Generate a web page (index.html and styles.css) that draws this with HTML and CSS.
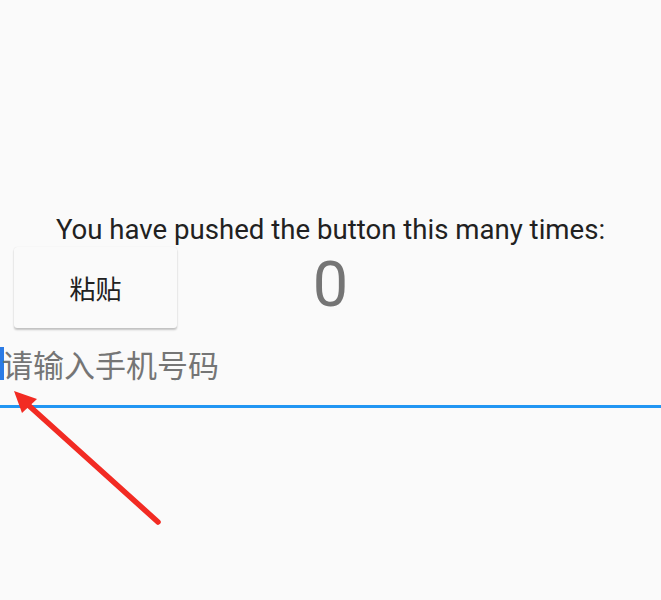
FILE: index.html
```html
<!DOCTYPE html>
<html lang="zh-CN">
<head>
  <meta charset="UTF-8">
  <meta name="viewport" content="width=device-width, initial-scale=1.0">
  <title>Flutter Demo</title>
  <link rel="stylesheet" href="styles.css">
</head>
<body>
  <div class="page">
    <p class="caption">You have pushed the button this many times:</p>

    <div class="counter-row">
      <button class="paste-btn">粘贴</button>
      <span class="counter">0</span>
      <span></span>
    </div>

    <div class="phone-field">
      <span class="cursor"></span>
      <span class="placeholder">请输入手机号码</span>
    </div>

    <!-- annotation arrow pointing at the cursor -->
    <svg class="arrow" width="661" height="600" viewBox="0 0 661 600">
      <line x1="158" y1="522" x2="26" y2="403" stroke="#f22b23" stroke-width="5.5" stroke-linecap="round"/>
      <polygon points="14,391 37,399 22,413" fill="#f22b23"/>
    </svg>
  </div>
</body>
</html>
```

FILE: styles.css
```css
html, body {
  margin: 0;
  padding: 0;
}

body {
  background-color: #fafafa;
  font-family: Roboto, "Noto Sans CJK SC", sans-serif;
  color: #212121;
}

.page {
  position: relative;
  width: 661px;
  height: 600px;
  overflow: hidden;
  padding-top: 213px;
  box-sizing: border-box;
}

.caption {
  margin: 0;
  text-align: center;
  font-size: 27.6px;
  line-height: 34px;
  color: #212121;
}

.counter-row {
  display: grid;
  grid-template-columns: 1fr auto 1fr;
  align-items: start;
  height: 90px;
}

.paste-btn {
  justify-self: start;
  margin-left: 14px;
  width: 163px;
  height: 81px;
  border: none;
  border-radius: 3px;
  background-color: #fafafa;
  box-shadow: 0 2px 2px rgba(0, 0, 0, 0.22), 0 0 1px rgba(0, 0, 0, 0.12);
  font-family: "Noto Sans CJK SC", sans-serif;
  font-size: 26px;
  color: #212121;
  padding: 0;
}

.counter {
  font-size: 63px;
  line-height: 70px;
  color: #757575;
  margin-top: 3px;
}

.phone-field {
  display: flex;
  height: 58px;
  border-bottom: 3px solid #2196f3;
  margin-top: 10px;
}

.cursor {
  width: 4px;
  height: 33px;
  background-color: #2c7be5;
  margin-right: -2px;
}

.placeholder {
  font-family: "Noto Sans CJK SC", sans-serif;
  font-size: 31px;
  line-height: 40px;
  margin-top: -3px;
  color: #757575;
}

.arrow {
  position: absolute;
  left: 0;
  top: 0;
}
```
